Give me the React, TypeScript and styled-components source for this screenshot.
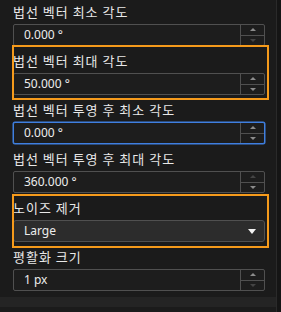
import React from "react";
import styled, { createGlobalStyle, css } from "styled-components";

const Global = createGlobalStyle`
  html, body { margin: 0; padding: 0; background: #1b1b1b; }
  body { font-family: "Noto Sans", "Noto Sans CJK KR", sans-serif; }
`;

const Page = styled.div`
  width: 281px;
  height: 312px;
  display: flex;
  background: #1b1b1b;
  overflow: hidden;
`;

const Main = styled.div`
  flex: 1;
  display: flex;
  flex-direction: column;
`;

const Panel = styled.div`
  flex: 1;
  display: flex;
  flex-direction: column;
  gap: 3px;
  padding: 0 11px 0 13px;
`;

const BottomBar = styled.div`
  height: 10px;
  background: #242424;
  margin-bottom: 5px;
`;

const ScrollTrack = styled.div`
  width: 4px;
  border-left: 1px solid #2a2a2a;
  background: #151515;
`;

const Field = styled.div<{ $hl?: boolean; $top?: number; $bottom?: number }>`
  position: relative;
  display: flex;
  flex-direction: column;
  ${(p) =>
    p.$hl &&
    css`
      &::after {
        content: "";
        position: absolute;
        left: -1px;
        right: -4px;
        top: ${-(p.$top ?? 3)}px;
        bottom: ${-(p.$bottom ?? 5)}px;
        border: 2px solid #f59a1b;
        pointer-events: none;
      }
    `}
`;

const Label = styled.div`
  height: 24px;
  line-height: 24px;
  font-family: "Noto Sans CJK KR", "Noto Sans", sans-serif;
  font-size: 13px;
  letter-spacing: 1px;
  color: #e8e8e8;
  white-space: nowrap;
`;

const Box = styled.div<{ $focus?: boolean }>`
  height: 22px;
  box-sizing: border-box;
  display: flex;
  border: 1px solid ${(p) => (p.$focus ? "#3f7fe0" : "#505050")};
  ${(p) => p.$focus && css`box-shadow: 0 0 0 0.5px #3f7fe0;`}
  border-radius: 2px;
  background: #1d1d1d;
`;

const Value = styled.div`
  flex: 1;
  padding-left: 10px;
  line-height: 20px;
  font-size: 12px;
  color: #ececec;
  font-family: "Noto Sans", "Noto Sans CJK KR", sans-serif;
`;

const Spinner = styled.div`
  width: 23px;
  display: flex;
  flex-direction: column;
  border-left: 1px solid #505050;
`;

const SpinBtn = styled.div<{ $down?: boolean; $off?: boolean }>`
  flex: 1;
  display: flex;
  align-items: center;
  justify-content: center;
  ${(p) => p.$down && css`border-top: 1px solid #505050;`}
  &::before {
    content: "";
    width: 0;
    height: 0;
    border-left: 3px solid transparent;
    border-right: 3px solid transparent;
    ${(p) =>
      p.$down
        ? css`border-top: 3px solid ${p.$off ? "#444" : "#8c8c8c"};`
        : css`border-bottom: 3px solid ${p.$off ? "#444" : "#8c8c8c"};`}
  }
`;

const Select = styled.div`
  height: 22px;
  box-sizing: border-box;
  display: flex;
  align-items: center;
  border: 1px solid #505050;
  border-radius: 3px;
  background: #2c2c2c;
  padding-right: 8px;
`;

const Caret = styled.div`
  width: 0;
  height: 0;
  border-left: 4px solid transparent;
  border-right: 4px solid transparent;
  border-top: 5px solid #f2f2f2;
`;

type NumProps = {
  label: string;
  value: string;
  upOff?: boolean;
  downOff?: boolean;
  focus?: boolean;
  hl?: boolean;
};

function NumField({ label, value, upOff, downOff, focus, hl }: NumProps) {
  return (
    <Field $hl={hl} $top={4} $bottom={5}>
      <Label>{label}</Label>
      <Box $focus={focus}>
        <Value>{value}</Value>
        <Spinner>
          <SpinBtn $off={upOff} />
          <SpinBtn $down $off={downOff} />
        </Spinner>
      </Box>
    </Field>
  );
}

export default function App() {
  return (
    <>
      <Global />
      <Page>
        <Main>
          <Panel>
            <NumField label="법선 벡터 최소 각도" value="0.000 °" downOff />
            <NumField label="법선 벡터 최대 각도" value="50.000 °" hl />
            <NumField label="법선 벡터 투영 후 최소 각도" value="0.000 °" focus />
            <NumField label="법선 벡터 투영 후 최대 각도" value="360.000 °" upOff />
            <Field $hl $top={2} $bottom={6}>
              <Label>노이즈 제거</Label>
              <Select>
                <Value>Large</Value>
                <Caret />
              </Select>
            </Field>
            <NumField label="평활화 크기" value="1 px" downOff />
          </Panel>
          <BottomBar />
        </Main>
        <ScrollTrack />
      </Page>
    </>
  );
}
